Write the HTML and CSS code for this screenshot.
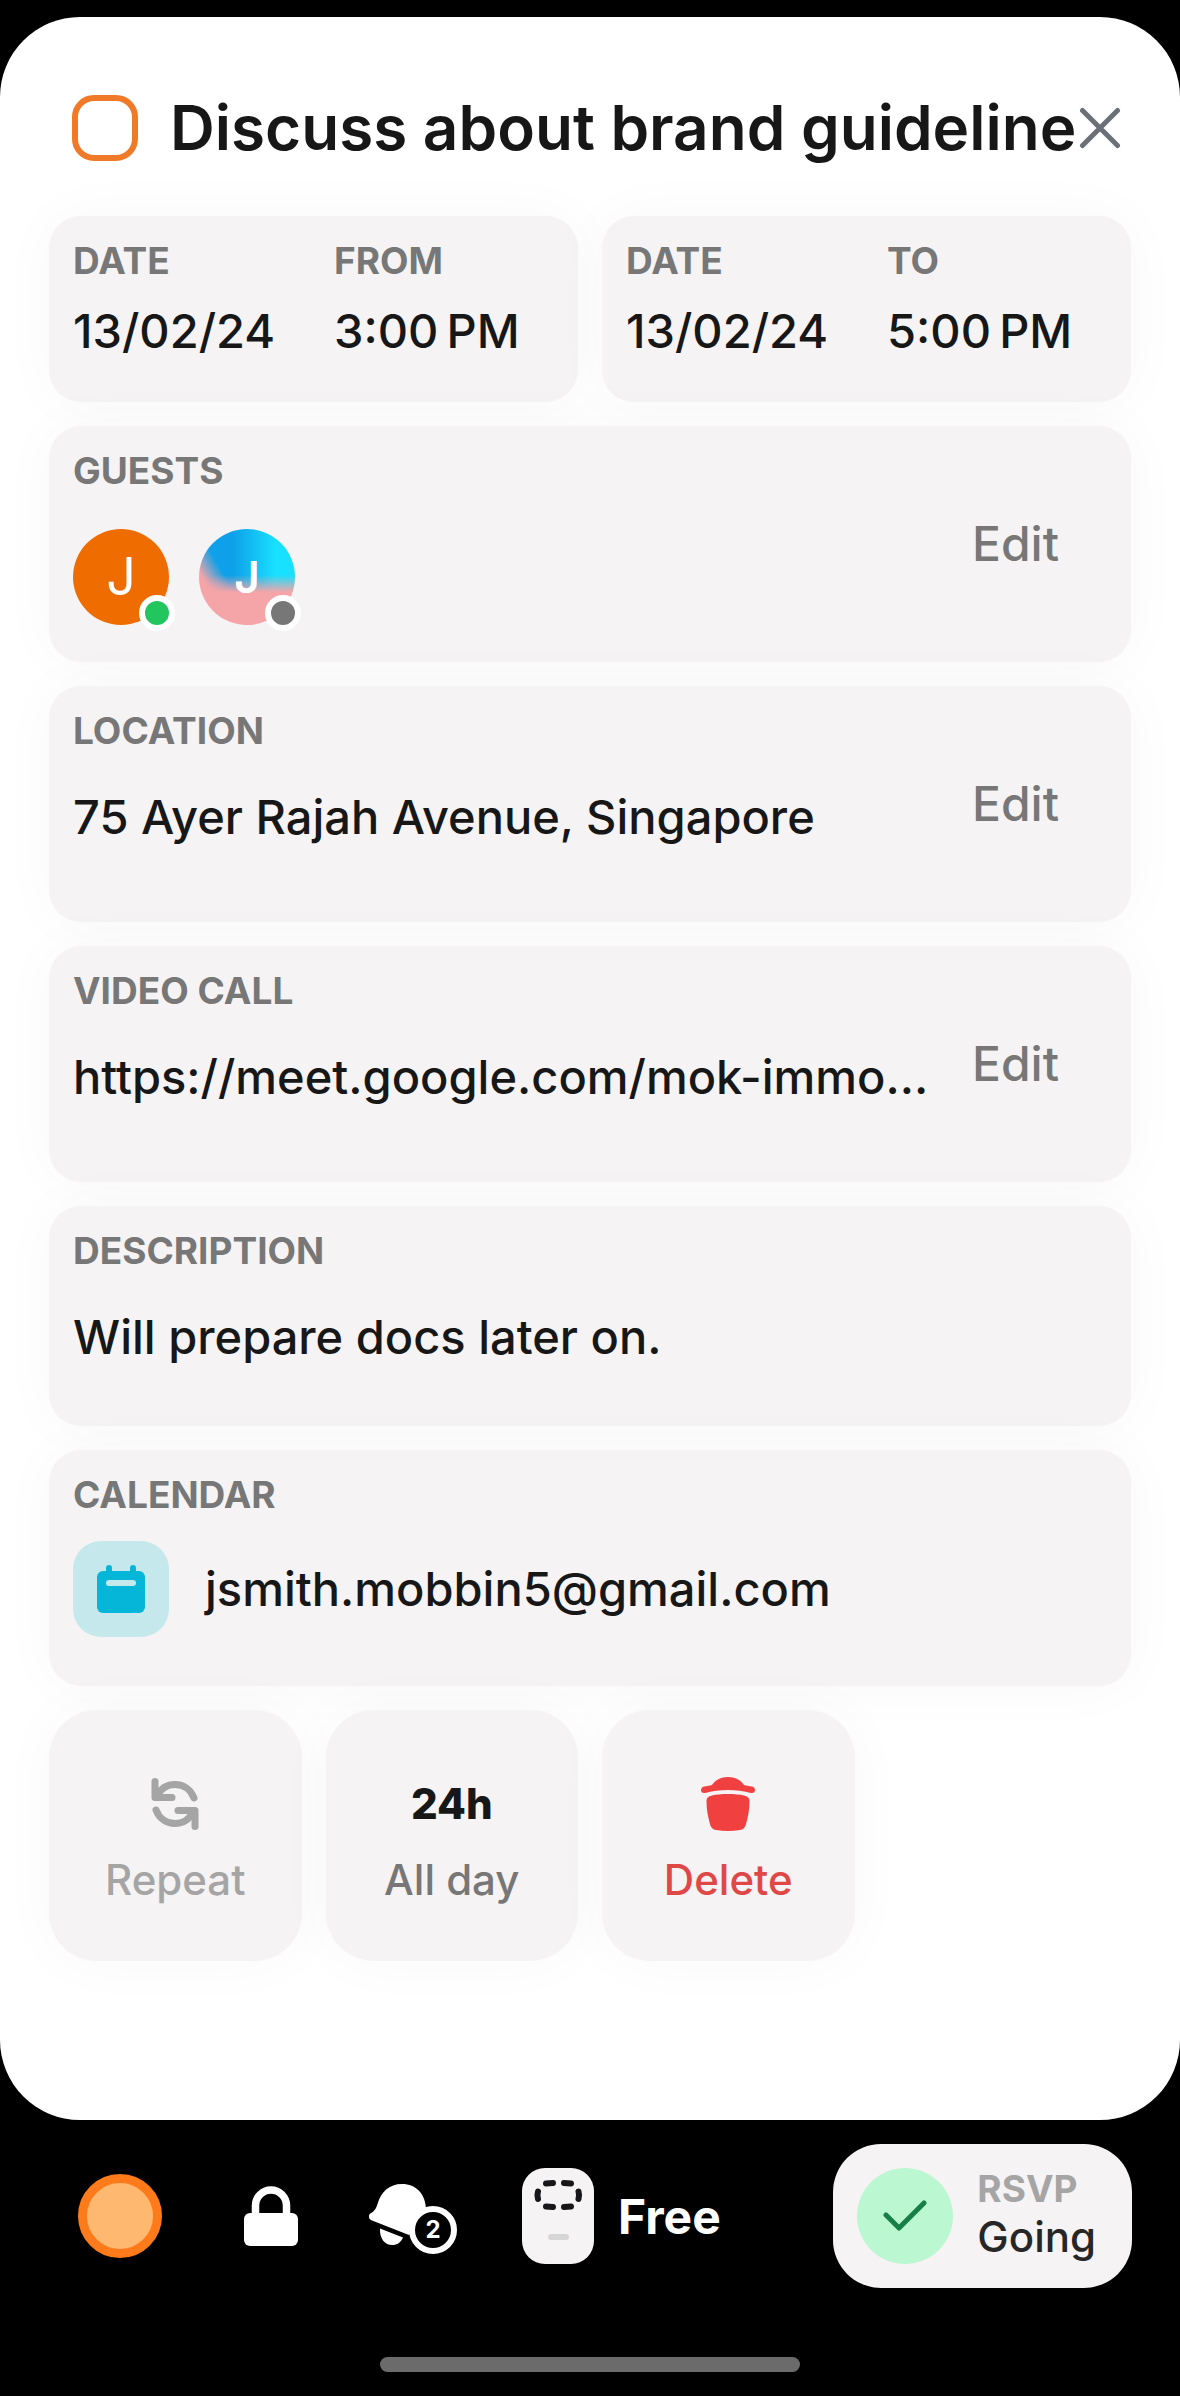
FILE: index.html
```html
<!DOCTYPE html>
<html lang="en">
<head>
  <meta charset="UTF-8">
  <meta name="viewport" content="width=device-width, initial-scale=1.0">
  <title>Discuss about brand guideline</title>
  <link rel="stylesheet" href="styles.css">
</head>
<body>
  <!-- Event sheet -->
  <main class="sheet">
    <header class="header">
      <input type="checkbox" class="check" id="done" aria-labelledby="event-title">
      <h1 class="title" id="event-title">Discuss about brand guideline</h1>
      <button class="close" aria-label="Close">
        <svg width="42" height="42" viewBox="0 0 42 42" fill="none" stroke="#6b7078" stroke-width="5" stroke-linecap="round">
          <path d="M3.500 3.500 38.500 38.500M38.500 3.500 3.500 38.500"/>
        </svg>
      </button>
    </header>

    <div class="cards">
      <section class="card dates">
        <div>
          <h2 class="label">DATE</h2>
          <p class="value">13/02/24</p>
        </div>
        <div>
          <h2 class="label">FROM</h2>
          <p class="value">3:00&#8239;PM</p>
        </div>
      </section>
      <section class="card dates">
        <div>
          <h2 class="label">DATE</h2>
          <p class="value">13/02/24</p>
        </div>
        <div>
          <h2 class="label">TO</h2>
          <p class="value">5:00&#8239;PM</p>
        </div>
      </section>

      <section class="card row">
        <div class="info">
          <h2 class="label">GUESTS</h2>
          <div class="guests">
            <div class="avatar avatar-orange">J<span class="status online"></span></div>
            <div class="avatar avatar-blue">J<span class="status"></span></div>
          </div>
        </div>
        <button class="edit">Edit</button>
      </section>

      <section class="card row">
        <div class="info">
          <h2 class="label">LOCATION</h2>
          <p class="value">75 Ayer Rajah Avenue, Singapore</p>
        </div>
        <button class="edit">Edit</button>
      </section>

      <section class="card row">
        <div class="info">
          <h2 class="label">VIDEO CALL</h2>
          <p class="value">https://meet.google.com/mok-immo…</p>
        </div>
        <button class="edit">Edit</button>
      </section>

      <section class="card row description">
        <div class="info">
          <h2 class="label">DESCRIPTION</h2>
          <p class="value">Will prepare docs later on.</p>
        </div>
      </section>

      <section class="card row">
        <div class="info">
          <h2 class="label">CALENDAR</h2>
          <div class="calendar">
            <span class="calendar-icon">
              <svg width="48" height="56" viewBox="0 0 48 56">
                <rect x="0" y="10" width="48" height="42" rx="6" fill="#06b6d8"/>
                <path d="M12 7v8M36 7v8" stroke="#06b6d8" stroke-width="6" stroke-linecap="round"/>
                <path d="M12 22h24" stroke="#c5e8ec" stroke-width="6" stroke-linecap="round"/>
              </svg>
            </span>
            <p class="value">jsmith.mobbin5@gmail.com</p>
          </div>
        </div>
      </section>

      <!-- Actions -->
      <button class="tile repeat">
        <span class="tile-icon">
          <svg width="48" height="52" viewBox="0 0 48 52" fill="none" stroke="#a5a5a5" stroke-width="7" stroke-linecap="round" stroke-linejoin="round">
            <path d="M4 3.500v16h17"/>
            <path d="M6 18C10 10 17 6.500 24 6.500c9 0 16 5.500 19 13.500"/>
            <path d="M44 48.500V32.500H27"/>
            <path d="M42 34c-4 8-11 11.500-18 11.500-9 0-16-5.500-19-13.500"/>
          </svg>
        </span>
        <span>Repeat</span>
      </button>
      <button class="tile">
        <span class="tile-icon">24h</span>
        <span>All day</span>
      </button>
      <button class="tile delete">
        <span class="tile-icon">
          <svg width="54" height="54" viewBox="0 0 54 54" fill="#f04040">
            <path d="M3 9.500C6 9 9 8.500 11 8 14 3 20 0 27 0s13 3 16 8c2 .5 5 1 8 1.500 2 .5 3 2 3 3.500 0 2-1.500 3.500-4 3C43 14.200 35 13 27 13S11 14.200 4 16c-2.500.5-4-1-4-3 0-1.500 1-3 3-3.500z"/>
            <path d="M27 17c7 0 12 .5 16 1.500 4 1 5.500 2.500 5.500 6 0 8-1.500 16-3.500 22.500-1 4-3 5.500-6 6-4 .7-8 1-12 1s-8-.3-12-1c-3-.5-5-2-6-6C7 40.500 5.500 32.500 5.500 24.500c0-3.500 1.500-5 5.500-6 4-1 9-1.500 16-1.500z"/>
          </svg>
        </span>
        <span>Delete</span>
      </button>
    </div>
  </main>

  <!-- Bottom bar -->
  <footer class="bar">
    <button class="color" aria-label="Color"></button>
    <button class="lock" aria-label="Private">
      <svg width="54" height="60" viewBox="0 0 54 60">
        <path d="M11.500 32V19.500a15.500 15.500 0 0 1 31 0V32" fill="none" stroke="#fff" stroke-width="7.500"/>
        <rect x="0" y="27" width="54" height="33" rx="6" fill="#fff"/>
      </svg>
    </button>
    <button class="bell" aria-label="Reminders">
      <svg width="60" height="64" viewBox="0 0 60 64" fill="#fff">
        <path d="M2 29C5 27.500 7 25 8.500 20 12 8 20 0 33 0c14 0 24 10 24 26L40 51 3 36.500c-4-1.500-4-6-1-7.500z"/>
        <path d="M11 44.500 34 53.500c-2 5-6 7.500-11 7.500-7 0-12.500-6-12-16.500z"/>
      </svg>
      <span class="badge">2</span>
    </button>
    <button class="free">
      <svg width="72" height="96" viewBox="0 0 72 96">
        <rect width="72" height="96" rx="23" fill="#f5f3f4"/>
        <path d="M24 15.500l7-.5M42 15l7 .5M24 38.500l7 .5M42 39l7-.5M16 23.500c-.8 2.500-.8 5 0 7.500M56.500 23.500c.8 2.500.8 5 0 7.500" fill="none" stroke="#17171a" stroke-width="6" stroke-linecap="round"/>
        <path d="M29 69h15" stroke="#d6d6d6" stroke-width="6" stroke-linecap="round"/>
      </svg>
      <span>Free</span>
    </button>
    <button class="rsvp">
      <span class="rsvp-icon">
        <svg width="44" height="32" viewBox="0 0 44 32" fill="none" stroke="#178048" stroke-width="5" stroke-linecap="round" stroke-linejoin="round">
          <path d="M3 15 16 28 41 3"/>
        </svg>
      </span>
      <span class="rsvp-text">
        <span class="rsvp-label">RSVP</span>
        <span>Going</span>
      </span>
    </button>
  </footer>
  <div class="home-indicator"></div>
</body>
</html>
```
FILE: styles.css
```css
* {
  margin: 0;
  padding: 0;
  box-sizing: border-box;
}

body {
  padding-top: 17px;
  background-color: #000;
  color: #171717;
  font-family: Inter, "Liberation Sans", sans-serif;
  font-weight: 500;
}

button {
  border: none;
  background: none;
  color: inherit;
  font: inherit;
  cursor: pointer;
}

svg {
  display: block;
}

.sheet {
  padding: 67px 49px 159px;
  background-color: #fff;
  border-radius: 80px;
}

/* Header */
.header {
  display: flex;
  align-items: center;
  margin-bottom: 44px;
  padding: 0 10px 0 23px;
}

.check {
  appearance: none;
  flex: none;
  width: 66px;
  height: 66px;
  margin-right: 32px;
  border: 6px solid #f07a28;
  border-radius: 22px;
}

.title {
  flex: 1;
  font-size: 62px;
  font-weight: 600;
  line-height: 88px;
  white-space: nowrap;
}

/* Cards */
.cards {
  display: grid;
  grid-template-columns: repeat(4, 1fr);
  gap: 24px;
}

.card {
  grid-column: span 2;
  padding: 23px 24px;
  background-color: #f5f3f4;
  border-radius: 32px;
  box-shadow: 0 0 60px rgba(0, 0, 0, 0.03);
}

.dates {
  display: grid;
  grid-template-columns: 261px 1fr;
  min-height: 186px;
  white-space: nowrap;
}

.dates .value {
  margin-top: 16px;
}

.row {
  grid-column: span 4;
  display: flex;
  min-height: 236px;
}

.description {
  min-height: 220px;
}

.info {
  flex: 1;
}

.label {
  color: #777;
  font-size: 37px;
  font-weight: 700;
  line-height: 44px;
}

.value {
  font-size: 47px;
  line-height: 64px;
}

.info > .value {
  margin-top: 32px;
}

.edit {
  align-self: center;
  margin-right: 48px;
  color: #777;
  font-size: 48px;
  line-height: 64px;
}

.guests {
  display: flex;
  gap: 30px;
  margin-top: 36px;
}

.avatar {
  position: relative;
  width: 96px;
  height: 96px;
  border-radius: 50%;
  color: #fff;
  line-height: 96px;
  text-align: center;
}

.avatar-orange {
  background-color: #ee6c00;
  font-size: 52px;
  font-weight: 400;
}

.avatar-blue {
  background:
    linear-gradient(to top, #f5a5a8 34%, rgba(245, 165, 168, 0) 52%),
    linear-gradient(60deg, #f5a5a8 20%, rgba(245, 165, 168, 0) 36%),
    linear-gradient(to right, #0ea0e8 35%, #18e0ff 80%);
  font-size: 44px;
  font-weight: 600;
}

.status {
  position: absolute;
  right: -6px;
  bottom: -6px;
  width: 36px;
  height: 36px;
  border: 6px solid #fff;
  border-radius: 50%;
  background-color: #777;
}

.status.online {
  background-color: #22c55e;
}

.calendar {
  display: flex;
  align-items: center;
  gap: 36px;
  margin-top: 24px;
}

.calendar-icon {
  display: grid;
  place-items: center;
  width: 96px;
  height: 96px;
  border-radius: 28px;
  background-color: #c5e8ec;
}

/* Action tiles */
.tile {
  display: flex;
  flex-direction: column;
  align-items: center;
  gap: 20px;
  padding: 66px 0 53px;
  border-radius: 48px;
  background-color: #f5f3f4;
  box-shadow: 0 0 60px rgba(0, 0, 0, 0.03);
  color: #777;
  font-size: 42px;
  line-height: 56px;
}

.tile-icon {
  display: grid;
  place-items: center;
  height: 56px;
  color: #171717;
  font-weight: 800;
}

.repeat {
  color: #a5a5a5;
}

.delete {
  color: #e04848;
}

/* Bottom bar */
.bar {
  display: flex;
  align-items: center;
  padding: 24px 48px 69px 78px;
}

.color {
  width: 84px;
  height: 84px;
  border: 9px solid #ff7a1a;
  border-radius: 50%;
  background-color: #ffb870;
}

.lock {
  margin-left: 82px;
}

.bell {
  position: relative;
  width: 88px;
  margin-left: 71px;
}

.badge {
  position: absolute;
  right: 0;
  bottom: -6px;
  width: 48px;
  height: 48px;
  border: 6px solid #fff;
  border-radius: 50%;
  background-color: #000;
  color: #fff;
  font-size: 24px;
  font-weight: 700;
  line-height: 36px;
}

.free {
  display: flex;
  align-items: center;
  gap: 24px;
  margin-left: 65px;
  color: #fff;
  font-size: 48px;
  font-weight: 700;
}

.rsvp {
  display: flex;
  align-items: center;
  gap: 24px;
  height: 144px;
  margin-left: auto;
  padding: 0 36px 0 24px;
  border-radius: 48px;
  background-color: #f5f3f4;
}

.rsvp-icon {
  display: grid;
  place-items: center;
  width: 96px;
  height: 96px;
  border-radius: 50%;
  background-color: #bbf7d0;
}

.rsvp-text {
  display: flex;
  flex-direction: column;
  padding-bottom: 6px;
  color: #262626;
  font-size: 42px;
  line-height: 48px;
  text-align: left;
}

.rsvp-label {
  color: #a5a5a5;
  font-size: 37px;
  font-weight: 700;
}

.home-indicator {
  width: 420px;
  max-width: 60%;
  height: 15px;
  margin: 0 auto 24px;
  border-radius: 8px;
  background-color: #6b6b6b;
}
```
